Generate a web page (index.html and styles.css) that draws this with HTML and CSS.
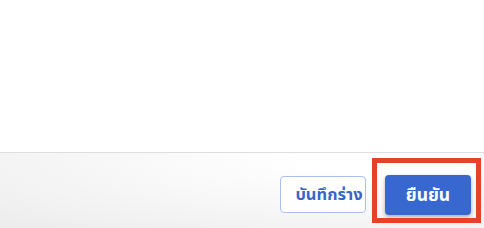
FILE: index.html
```html
<!DOCTYPE html>
<html lang="th">
<head>
    <meta charset="UTF-8">
    <meta name="viewport" content="width=device-width, initial-scale=1.0">
    <title>ยืนยัน</title>
    <link rel="stylesheet" href="styles.css">
</head>
<body>

<div class="page">
    <div class="content"></div>
    <div class="footer">
        <button class="btn-draft">บันทึกร่าง</button>
        <button class="btn-confirm">ยืนยัน</button>
        <div class="highlight"></div>
    </div>
</div>

</body>
</html>
```

FILE: styles.css
```css
body {
    font-family: "Noto Sans Thai", "Noto Sans", "DejaVu Sans", sans-serif;
    background-color: #fff;
    margin: 0;
    padding: 0;
}
.page {
    width: 484px;
    height: 228px;
    display: flex;
    flex-direction: column;
    overflow: hidden;
}
.content {
    height: 152px;
    border-bottom: 1px solid #dedede;
}
.footer {
    position: relative;
    flex: 1;
    display: flex;
    justify-content: flex-end;
    align-items: flex-start;
    gap: 19px;
    padding: 22px 13px 0 0;
    background: radial-gradient(ellipse at 85% 0%, #ffffff 20%, #f6f6f6 60%, #ececec 100%);
}
.btn-draft {
    height: 37px;
    width: 86px;
    margin-top: 1px;
    padding: 0 0 0 12px;
    background-color: #fff;
    color: #3a66c8;
    border: 1px solid #a9c0ee;
    border-radius: 4px;
    font-family: inherit;
    font-size: 16.5px;
    font-weight: 700;
    white-space: nowrap;
    cursor: pointer;
}
.btn-confirm {
    height: 40px;
    width: 86px;
    padding: 0;
    background-color: #3767cf;
    color: #fff;
    border: none;
    border-radius: 4px;
    font-family: inherit;
    font-size: 17.5px;
    font-weight: 700;
    box-shadow: 0 2px 4px rgba(0, 0, 0, 0.3);
    cursor: pointer;
}
.highlight {
    position: absolute;
    left: 372px;
    top: 5px;
    width: 99px;
    height: 55px;
    border: 5px solid #e8412b;
    pointer-events: none;
}
```
